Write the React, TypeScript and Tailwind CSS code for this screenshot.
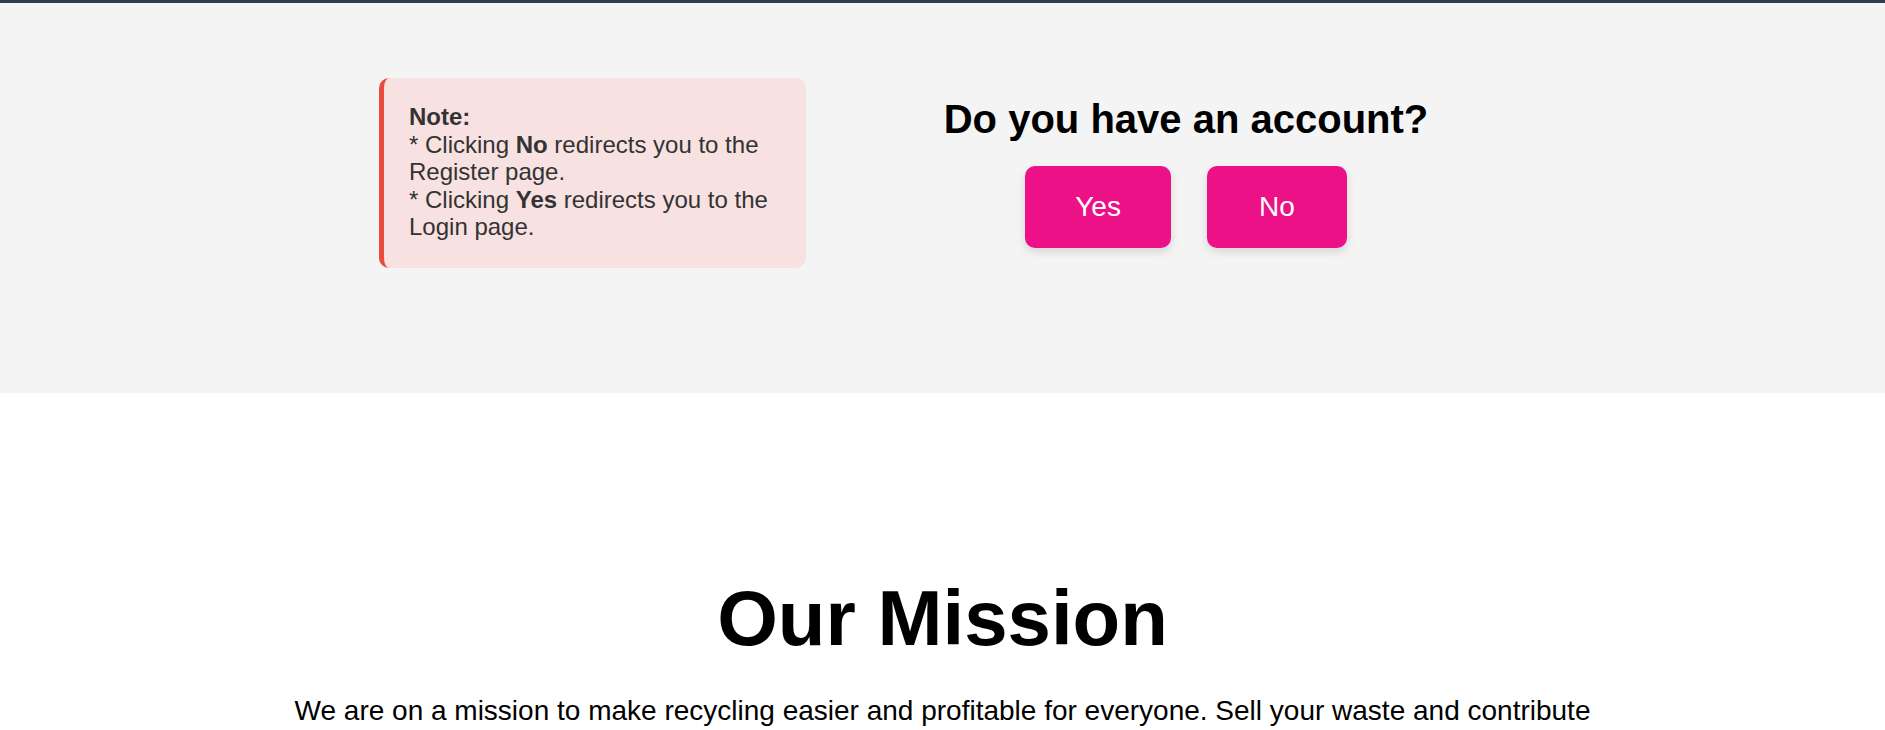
import React from 'react';

const AccountPrompt = () => {
  return (
    <section className="bg-[#f4f4f4] border-t-[3px] border-[#2c3e50] h-[393px] pt-[75px]">
      <div className="flex justify-center gap-[60px]">
        {/* Note box */}
        <div className="w-[427px] h-[190px] bg-[#f8e1e1] border-l-[5px] border-[#e74c3c] rounded-[10px] px-[25px] py-[25px] text-[24px] leading-[1.15] text-[#333]">
          <p className="font-bold">Note:</p>
          <p>* Clicking <strong>No</strong> redirects you to the Register page.</p>
          <p>* Clicking <strong>Yes</strong> redirects you to the Login page.</p>
        </div>

        {/* Question + buttons */}
        <div className="w-[640px] flex flex-col items-center pt-[18px]">
          <h2 className="text-[40px] font-bold leading-[1.15] text-black">Do you have an account?</h2>
          <div className="flex gap-[36px] mt-[24px]">
            <button className="bg-[#ed1187] text-white text-[28px] leading-[1.15] px-[50px] py-[25px] rounded-[10px] shadow-[0_4px_10px_rgba(0,0,0,0.12)] cursor-pointer">
              Yes
            </button>
            <button className="bg-[#ed1187] text-white text-[28px] leading-[1.15] px-[52px] py-[25px] rounded-[10px] shadow-[0_4px_10px_rgba(0,0,0,0.12)] cursor-pointer">
              No
            </button>
          </div>
        </div>
      </div>
    </section>
  );
};

const Mission = () => {
  return (
    <section className="bg-white pt-[181px] pb-20 text-center">
      <h1 className="text-[78px] font-bold leading-[1.15] text-black">Our Mission</h1>
      <p className="mt-[31px] max-w-[1360px] mx-auto text-[28px] leading-[1.15] text-black">
        We are on a mission to make recycling easier and profitable for everyone. Sell your waste and contribute
        <br />
        to a cleaner, greener planet while earning rewards for every item you recycle.
      </p>
    </section>
  );
};

export default function App() {
  return (
    <div className="min-h-screen bg-white font-['Liberation_Sans',Arial,sans-serif]">
      <AccountPrompt />
      <Mission />
    </div>
  );
}
